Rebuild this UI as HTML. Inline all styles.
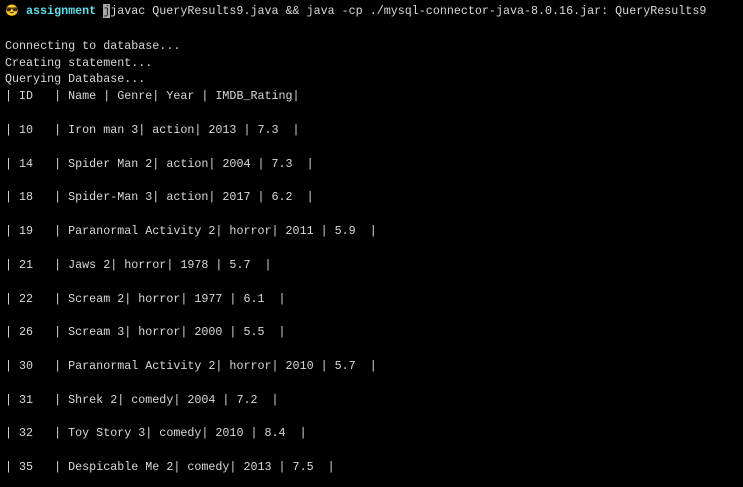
<!DOCTYPE html>
<html><head><meta charset="utf-8"><style>
html,body{margin:0;padding:0;background:#000;width:743px;height:487px;overflow:hidden}
pre{margin:0;position:absolute;left:5px;top:3px;font-family:"Liberation Mono",monospace;font-size:11.7px;line-height:16.86px;color:#d8d8d8;letter-spacing:0}
.c{color:#5fe0e8;font-weight:bold}
.cur{background:#a8a8a8;color:#222}
.e{display:inline-block;width:14px;font-size:11px}
</style></head><body>
<pre><span class="e">😎</span> <span class="c">assignment</span> <span class="cur">j</span>javac QueryResults9.java &amp;&amp; java -cp ./mysql-connector-java-8.0.16.jar: QueryResults9

Connecting to database...
Creating statement...
Querying Database...
| ID   | Name | Genre| Year | IMDB_Rating|

| 10   | Iron man 3| action| 2013 | 7.3  |

| 14   | Spider Man 2| action| 2004 | 7.3  |

| 18   | Spider-Man 3| action| 2017 | 6.2  |

| 19   | Paranormal Activity 2| horror| 2011 | 5.9  |

| 21   | Jaws 2| horror| 1978 | 5.7  |

| 22   | Scream 2| horror| 1977 | 6.1  |

| 26   | Scream 3| horror| 2000 | 5.5  |

| 30   | Paranormal Activity 2| horror| 2010 | 5.7  |

| 31   | Shrek 2| comedy| 2004 | 7.2  |

| 32   | Toy Story 3| comedy| 2010 | 8.4  |

| 35   | Despicable Me 2| comedy| 2013 | 7.5  |
</pre>
</body></html>
